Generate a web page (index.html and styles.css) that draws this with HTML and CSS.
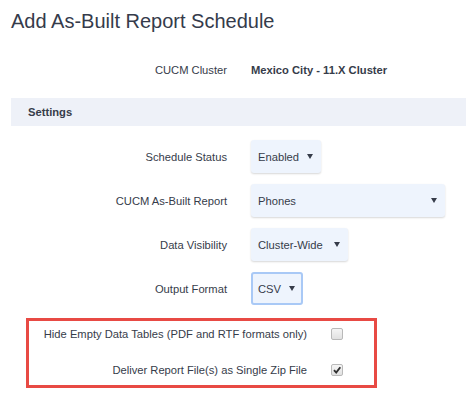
FILE: index.html
```html
<!DOCTYPE html>
<html>
<head>
<meta charset="utf-8">
<title>Add As-Built Report Schedule</title>
<link rel="stylesheet" href="styles.css">
</head>
<body>
<div class="page">
  <h1>Add As-Built Report Schedule</h1>

  <div class="row cluster">
    <div class="label">CUCM Cluster</div>
    <div class="value">Mexico City - 11.X Cluster</div>
  </div>

  <div class="section">Settings</div>

  <div class="form">
    <div class="row">
      <div class="label">Schedule Status</div>
      <div class="select w-status"><span>Enabled</span><svg class="arrow" width="6" height="5" viewBox="0 0 6 5"><polygon points="0,0 6,0 3,5"/></svg></div>
    </div>
    <div class="row">
      <div class="label">CUCM As-Built Report</div>
      <div class="select w-report"><span>Phones</span><svg class="arrow" width="6" height="5" viewBox="0 0 6 5"><polygon points="0,0 6,0 3,5"/></svg></div>
    </div>
    <div class="row">
      <div class="label">Data Visibility</div>
      <div class="select w-visibility"><span>Cluster-Wide</span><svg class="arrow" width="6" height="5" viewBox="0 0 6 5"><polygon points="0,0 6,0 3,5"/></svg></div>
    </div>
    <div class="row">
      <div class="label">Output Format</div>
      <div class="select w-format focused"><span>CSV</span><svg class="arrow" width="6" height="5" viewBox="0 0 6 5"><polygon points="0,0 6,0 3,5"/></svg></div>
    </div>
  </div>

  <div class="highlight">
    <div class="check-row">
      <div class="label">Hide Empty Data Tables (PDF and RTF formats only)</div>
      <span class="checkbox"></span>
    </div>
    <div class="check-row">
      <div class="label">Deliver Report File(s) as Single Zip File</div>
      <span class="checkbox checked"><svg width="10" height="10" viewBox="0 0 10 10"><path d="M2 5.2 L4.2 7.6 L8.3 2.2" fill="none" stroke="#2f2f2f" stroke-width="1.9"/></svg></span>
    </div>
  </div>
</div>
</body>
</html>
```

FILE: styles.css
```css
body{
margin:0;
font-family:"Liberation Sans", Arial, sans-serif;
font-size:11.2px;
color:#363c4a;
background:#ffffff;
}
.page{
padding-left:11px;
}
h1{
margin:9px 0 0;
font-size:20px;
font-weight:normal;
line-height:24px;
color:#353b4b;
}
.row{
display:grid;
grid-template-columns:216px auto;
column-gap:24px;
align-items:center;
}
.label{
text-align:right;
line-height:14px;
}
.cluster{
margin-top:30px;
}
.value{
font-weight:bold;
line-height:14px;
}
.section{
margin-top:21px;
height:28px;
line-height:28px;
padding-left:17px;
background:#eef1f8;
font-weight:bold;
}
.form{
margin-top:14px;
display:flex;
flex-direction:column;
gap:11px;
}
.select{
box-sizing:border-box;
height:33px;
display:flex;
align-items:center;
justify-content:space-between;
padding:0 8px 0 7px;
background:#eef4fd;
border-radius:3px;
box-shadow:0 1px 2px rgba(0,0,0,0.16);
color:#363c4a;
}
.arrow{
fill:#363c4a;
}
.w-status{width:70px;}
.w-report{width:194px;}
.w-visibility{width:97px;}
.w-format{width:52px;}
.focused{
border:2px solid #a9c9f6;
padding:0 6px 0 5px;
box-shadow:none;
}
.highlight{
box-sizing:border-box;
width:351px;
margin:13px 0 0 15px;
border:3px solid #e84a44;
padding:6px 0 8px;
display:flex;
flex-direction:column;
gap:22px;
}
.check-row{
display:grid;
grid-template-columns:278px 12px;
column-gap:24px;
align-items:center;
}
.checkbox{
box-sizing:border-box;
width:12px;
height:12px;
border:1px solid #b9b9b9;
border-radius:2px;
background:linear-gradient(#f5f5f5,#e1e1e1);
display:flex;
align-items:center;
justify-content:center;
}
```
